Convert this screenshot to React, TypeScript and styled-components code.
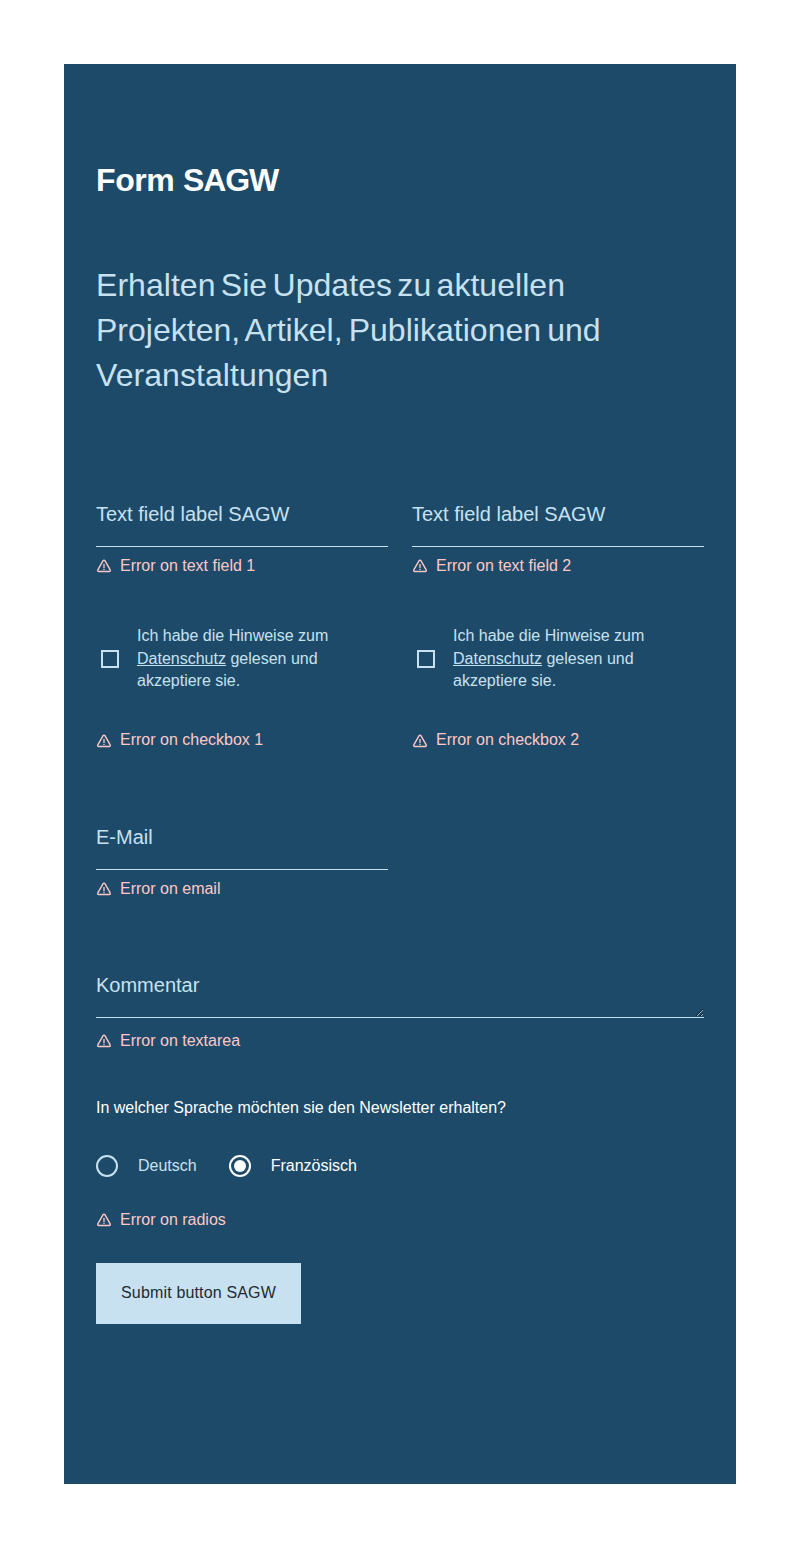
import React from "react";
import styled, { createGlobalStyle } from "styled-components";

const GlobalStyle = createGlobalStyle`
  *, *::before, *::after { box-sizing: border-box; }
  body { margin: 0; background: #fff; }
`;

const pale = "#c8e1f0";
const pink = "#ffc8c8";

const Page = styled.main`
  padding: 64px;
  font-family: "Liberation Sans", Arial, sans-serif;
  font-size: 16px;
  line-height: 18px;
  color: ${pale};
`;

const Panel = styled.form`
  display: flex;
  flex-direction: column;
  align-items: stretch;
  height: 1420px;
  padding: 97px 32px 0;
  background: #1d4a68;
`;

const Title = styled.h1`
  margin: 0;
  font-size: 32px;
  line-height: 38px;
  font-weight: 700;
  letter-spacing: -0.4px;
  color: #fff;
  white-space: nowrap;
`;

const Acronym = styled.span`
  letter-spacing: -1.1px;
`;

const Subtitle = styled.p`
  margin: 64px 0 97px;
  font-size: 32px;
  line-height: 45px;
  white-space: nowrap;
`;

const Line = styled.span<{ $letter: number; $word?: number }>`
  display: block;
  letter-spacing: ${(p) => p.$letter}px;
  word-spacing: ${(p) => p.$word ?? 0}px;
`;

const Columns = styled.div<{ $gapTop?: number }>`
  display: grid;
  grid-template-columns: 1fr 1fr;
  column-gap: 24px;
  margin-top: ${(p) => p.$gapTop ?? 0}px;
`;

const Cell = styled.div``;

const Field = styled.label<{ $gapTop?: number }>`
  display: grid;
  height: 52px;
  margin-top: ${(p) => p.$gapTop ?? 0}px;
  & > * { grid-area: 1 / 1; }
`;

const FieldLabel = styled.span`
  padding-top: 7px;
  font-size: 20px;
  line-height: 24px;
  pointer-events: none;
`;

const Input = styled.input`
  width: 100%;
  height: 52px;
  padding: 0;
  border: 0;
  border-bottom: 1px solid ${pale};
  outline: 0;
  background: transparent;
  color: #fff;
  font: inherit;
`;

const TextArea = styled.textarea`
  display: block;
  width: 100%;
  height: 52px;
  padding: 0;
  border: 0;
  border-bottom: 1px solid ${pale};
  outline: 0;
  background: transparent;
  color: #fff;
  font: inherit;
  resize: vertical;
`;

const ErrorRow = styled.div<{ $gapTop: number; $iconDrop: number }>`
  display: flex;
  align-items: flex-start;
  gap: 8px;
  height: 18px;
  margin-top: ${(p) => p.$gapTop}px;
  color: ${pink};
  svg { margin-top: ${(p) => p.$iconDrop}px; }
`;

const Icon = styled.svg`
  flex: none;
  width: 16px;
  height: 16px;
`;

const CheckLabel = styled.label`
  display: flex;
  align-items: center;
  height: 68px;
  padding-left: 5px;
  line-height: 22.5px;
`;

const CheckBox = styled.input.attrs({ type: "checkbox" })`
  appearance: none;
  flex: none;
  width: 18px;
  height: 18px;
  margin: 0 18px 0 0;
  border: 2px solid ${pale};
`;

const Link = styled.a`
  color: inherit;
  text-decoration: underline;
`;

const Question = styled.p`
  margin: 49px 0 0;
  color: #fff;
`;

const Radios = styled.div`
  display: flex;
  gap: 32px;
  margin-top: 38px;
`;

const RadioLabel = styled.label<{ $active?: boolean }>`
  display: flex;
  align-items: center;
  gap: 20px;
  height: 22px;
  color: ${(p) => (p.$active ? "#fff" : pale)};
`;

const Radio = styled.input.attrs({ type: "radio" })`
  appearance: none;
  display: grid;
  place-items: center;
  width: 22px;
  height: 22px;
  margin: 0;
  border: 2px solid currentColor;
  border-radius: 50%;
  color: inherit;
  &:checked::before {
    content: "";
    width: 12px;
    height: 12px;
    border-radius: 50%;
    background: currentColor;
  }
`;

const Submit = styled.button`
  align-self: flex-start;
  width: 205px;
  height: 61px;
  margin-top: 34px;
  padding: 0 0 1px;
  border: 0;
  background: ${pale};
  color: #1f2a33;
  font: 16px/18px "Liberation Sans", Arial, sans-serif;
  letter-spacing: 0.16px;
  white-space: nowrap;
`;

interface FieldErrorProps {
  gapTop: number;
  iconDrop?: number;
  children: React.ReactNode;
}

function FieldError({ gapTop, iconDrop = 1, children }: FieldErrorProps) {
  return (
    <ErrorRow $gapTop={gapTop} $iconDrop={iconDrop}>
      <Icon viewBox="0 0 16 16" fill="none" stroke="currentColor" strokeWidth="1.4" strokeLinecap="round" strokeLinejoin="round">
        <path d="M7.1 2.7 1.8 11.9a1.05 1.05 0 0 0 .9 1.6h10.6a1.05 1.05 0 0 0 .9-1.6L8.9 2.7a1.05 1.05 0 0 0-1.8 0Z" />
        <path d="M8 6v4M8 10.8v1.2" strokeWidth="1.3" strokeLinecap="butt" />
      </Icon>
      <span>{children}</span>
    </ErrorRow>
  );
}

function Consent() {
  return (
    <CheckLabel>
      <CheckBox />
      <span>
        Ich habe die Hinweise zum
        <br />
        <Link href="#">Datenschutz</Link> gelesen und
        <br />
        akzeptiere sie.
      </span>
    </CheckLabel>
  );
}

export default function App() {
  return (
    <Page>
      <GlobalStyle />
      <Panel>
        <Title>
          Form <Acronym>SAGW</Acronym>
        </Title>
        <Subtitle>
          <Line $letter={0.04} $word={-3.6}>Erhalten Sie Updates zu aktuellen</Line>
          <Line $letter={0.02} $word={-2.8}>Projekten, Artikel, Publikationen und</Line>
          <Line $letter={0.07}>Veranstaltungen</Line>
        </Subtitle>
        <Columns>
          {[1, 2].map((n) => (
            <Cell key={n}>
              <Field>
                <Input aria-label="Text field" />
                <FieldLabel>Text field label SAGW</FieldLabel>
              </Field>
              <FieldError gapTop={10}>Error on text field {n}</FieldError>
            </Cell>
          ))}
        </Columns>
        <Columns $gapTop={50}>
          {[1, 2].map((n) => (
            <Cell key={n}>
              <Consent />
              <FieldError gapTop={38} iconDrop={2}>Error on checkbox {n}</FieldError>
            </Cell>
          ))}
        </Columns>
        <Columns $gapTop={69}>
          <Cell>
            <Field>
              <Input type="email" />
              <FieldLabel>E-Mail</FieldLabel>
            </Field>
            <FieldError gapTop={10}>Error on email</FieldError>
          </Cell>
        </Columns>
        <Field $gapTop={68}>
          <TextArea />
          <FieldLabel>Kommentar</FieldLabel>
        </Field>
        <FieldError gapTop={14}>Error on textarea</FieldError>
        <Question>In welcher Sprache möchten sie den Newsletter erhalten?</Question>
        <Radios>
          <RadioLabel>
            <Radio name="language" />
            Deutsch
          </RadioLabel>
          <RadioLabel $active>
            <Radio name="language" defaultChecked />
            Französisch
          </RadioLabel>
        </Radios>
        <FieldError gapTop={34}>Error on radios</FieldError>
        <Submit type="button">Submit button SAGW</Submit>
      </Panel>
    </Page>
  );
}
